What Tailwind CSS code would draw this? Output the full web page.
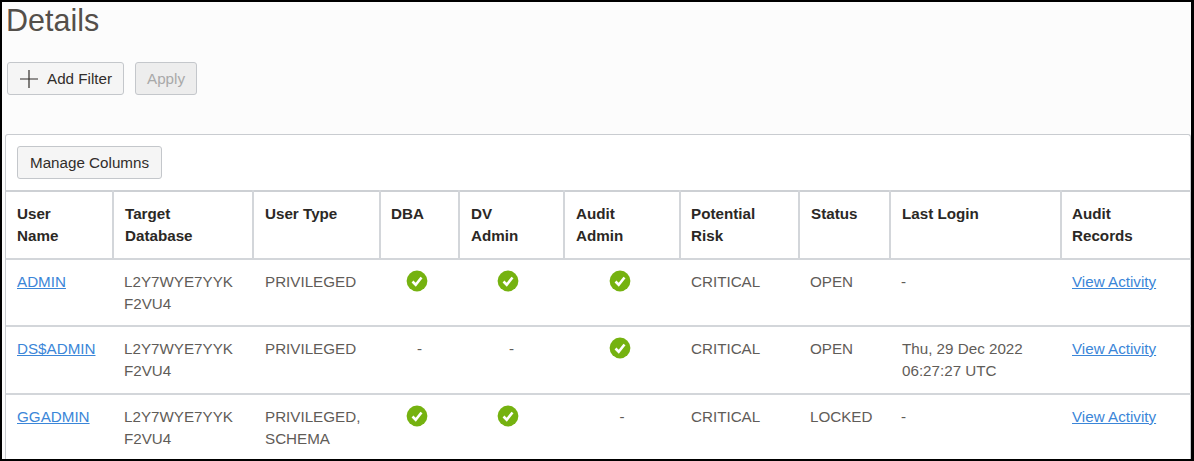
<!DOCTYPE html>
<html lang="en">
  <head>
    <meta charset="UTF-8" />
    <title>Details</title>
    <script src="https://cdn.jsdelivr.net/npm/@tailwindcss/browser@4"></script>
  </head>
  <body class="bg-black">
    <div class="h-[461px] w-[1194px] overflow-hidden border-2 border-r-[3px] border-black bg-[#fcfcfc] font-['Liberation_Sans',Arial,sans-serif] text-[15.2px] leading-[22px] text-[#5f5c58]">
      <h1 class="pl-[4px] text-[30.5px] leading-[36px] text-[#544f4a]">Details</h1>

      <!-- Filters -->
      <div class="mt-[24px] flex gap-[11px] pl-[5px]">
        <button class="flex h-[33px] w-[117px] items-center rounded-[3px] border border-[#c4c7cb] bg-[#f5f5f5] pl-[11px] text-[#312d2a]">
          <svg class="mr-[8px] h-[20px] w-[20px]" viewBox="0 0 20 20" fill="none" stroke="#312d2a" stroke-width="1.2">
            <path d="M10 1v18M1 10h18" />
          </svg>
          Add Filter
        </button>
        <button class="h-[33px] w-[62px] rounded-[3px] border border-[#c4c7cb] bg-[#ededed] text-[#a9a9a9]">Apply</button>
      </div>

      <!-- Report -->
      <div class="mt-[39px] ml-[3px] rounded-t-[3px] border border-b-0 border-[#c9ccd0] bg-white">
        <div class="h-[55px] pl-[11px] pt-[11px]">
          <button class="h-[33px] w-[145px] rounded-[3px] border border-[#c4c7cb] bg-[#f5f5f5] text-[#312d2a]">Manage Columns</button>
        </div>
        <table class="w-[1185px] table-fixed border-collapse">
          <colgroup>
            <col class="w-[107px]" />
            <col class="w-[140px]" />
            <col class="w-[127px]" />
            <col class="w-[79px]" />
            <col class="w-[105px]" />
            <col class="w-[116px]" />
            <col class="w-[119px]" />
            <col class="w-[91px]" />
            <col class="w-[171px]" />
            <col />
          </colgroup>
          <thead>
            <tr class="h-[68px] border-y-2 border-y-[#cdd0d4] border-b-[#d3d6da] align-top text-left font-bold text-[#2b2825]">
              <th class="border-r-2 border-[#d3d6da] pl-[11px] pt-[11px]">User<br />Name</th>
              <th class="border-r-2 border-[#d3d6da] pl-[11px] pt-[11px]">Target<br />Database</th>
              <th class="border-r-2 border-[#d3d6da] pl-[11px] pt-[11px]">User Type</th>
              <th class="border-r-2 border-[#d3d6da] pl-[10px] pt-[11px]">DBA</th>
              <th class="border-r-2 border-[#d3d6da] pl-[11px] pt-[11px]">DV<br />Admin</th>
              <th class="border-r-2 border-[#d3d6da] pl-[11px] pt-[11px]">Audit<br />Admin</th>
              <th class="border-r-2 border-[#d3d6da] pl-[10px] pt-[11px]">Potential<br />Risk</th>
              <th class="border-r-2 border-[#d3d6da] pl-[11px] pt-[11px]">Status</th>
              <th class="border-r-2 border-[#d3d6da] pl-[11px] pt-[11px]">Last Login</th>
              <th class="pl-[10px] pt-[11px]">Audit<br />Records</th>
            </tr>
          </thead>
          <tbody>
            <tr class="h-[67px] border-b-2 border-[#d3d6da] align-top">
              <td class="pl-[11px] pt-[11px]"><a href="#" class="text-[#3b86d8] underline">ADMIN</a></td>
              <td class="pl-[11px] pt-[11px]">L2Y7WYE7YYK<br />F2VU4</td>
              <td class="pl-[12px] pt-[11px]">PRIVILEGED</td>
              <td class="pt-[10px] text-center"><svg class="mr-[5px] inline-block h-[22px] w-[22px] align-top" viewBox="0 0 22 22"><circle cx="11" cy="11" r="10.4" fill="#75b210" /><path d="M6.5 11.5l3.2 3.2 5.8-7.2" fill="none" stroke="#fff" stroke-width="2.6" /></svg></td>
              <td class="pt-[10px] text-center"><svg class="mr-[7px] inline-block h-[22px] w-[22px] align-top" viewBox="0 0 22 22"><circle cx="11" cy="11" r="10.4" fill="#75b210" /><path d="M6.5 11.5l3.2 3.2 5.8-7.2" fill="none" stroke="#fff" stroke-width="2.6" /></svg></td>
              <td class="pt-[10px] text-center"><svg class="mr-[5px] inline-block h-[22px] w-[22px] align-top" viewBox="0 0 22 22"><circle cx="11" cy="11" r="10.4" fill="#75b210" /><path d="M6.5 11.5l3.2 3.2 5.8-7.2" fill="none" stroke="#fff" stroke-width="2.6" /></svg></td>
              <td class="pl-[11px] pt-[11px]">CRITICAL</td>
              <td class="pl-[11px] pt-[11px]">OPEN</td>
              <td class="pl-[11px] pt-[11px]">-</td>
              <td class="pl-[11px] pt-[11px]"><a href="#" class="text-[#3b86d8] underline">View Activity</a></td>
            </tr>
            <tr class="h-[68px] border-b-2 border-[#d3d6da] align-top">
              <td class="pl-[11px] pt-[11px]"><a href="#" class="text-[#3b86d8] underline">DS$ADMIN</a></td>
              <td class="pl-[11px] pt-[11px]">L2Y7WYE7YYK<br />F2VU4</td>
              <td class="pl-[12px] pt-[11px]">PRIVILEGED</td>
              <td class="pt-[11px] text-center">-</td>
              <td class="pt-[11px] text-center">-</td>
              <td class="pt-[10px] text-center"><svg class="mr-[5px] inline-block h-[22px] w-[22px] align-top" viewBox="0 0 22 22"><circle cx="11" cy="11" r="10.4" fill="#75b210" /><path d="M6.5 11.5l3.2 3.2 5.8-7.2" fill="none" stroke="#fff" stroke-width="2.6" /></svg></td>
              <td class="pl-[11px] pt-[11px]">CRITICAL</td>
              <td class="pl-[11px] pt-[11px]">OPEN</td>
              <td class="pl-[12px] pt-[11px]">Thu, 29 Dec 2022<br />06:27:27 UTC</td>
              <td class="pl-[11px] pt-[11px]"><a href="#" class="text-[#3b86d8] underline">View Activity</a></td>
            </tr>
            <tr class="h-[66px] align-top">
              <td class="pl-[11px] pt-[11px]"><a href="#" class="text-[#3b86d8] underline">GGADMIN</a></td>
              <td class="pl-[11px] pt-[11px]">L2Y7WYE7YYK<br />F2VU4</td>
              <td class="pl-[12px] pt-[11px]">PRIVILEGED,<br />SCHEMA</td>
              <td class="pt-[10px] text-center"><svg class="mr-[5px] inline-block h-[22px] w-[22px] align-top" viewBox="0 0 22 22"><circle cx="11" cy="11" r="10.4" fill="#75b210" /><path d="M6.5 11.5l3.2 3.2 5.8-7.2" fill="none" stroke="#fff" stroke-width="2.6" /></svg></td>
              <td class="pt-[10px] text-center"><svg class="mr-[7px] inline-block h-[22px] w-[22px] align-top" viewBox="0 0 22 22"><circle cx="11" cy="11" r="10.4" fill="#75b210" /><path d="M6.5 11.5l3.2 3.2 5.8-7.2" fill="none" stroke="#fff" stroke-width="2.6" /></svg></td>
              <td class="pt-[11px] text-center">-</td>
              <td class="pl-[11px] pt-[11px]">CRITICAL</td>
              <td class="pl-[11px] pt-[11px]">LOCKED</td>
              <td class="pl-[11px] pt-[11px]">-</td>
              <td class="pl-[11px] pt-[11px]"><a href="#" class="text-[#3b86d8] underline">View Activity</a></td>
            </tr>
          </tbody>
        </table>
      </div>
    </div>
  </body>
</html>
